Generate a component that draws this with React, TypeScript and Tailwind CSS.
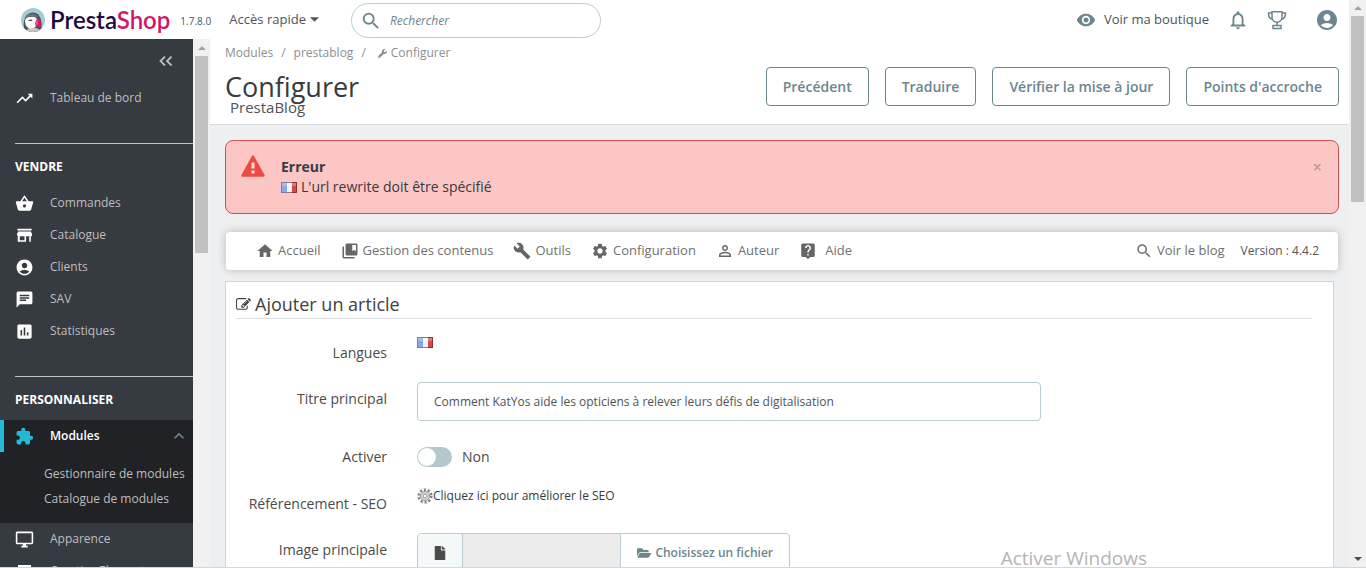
import type { ReactNode } from 'react'
import clsx from 'clsx'
import { FaFile, FaFolderOpen, FaWrench } from 'react-icons/fa'
import {
    MdAccountCircle,
    MdAssessment,
    MdBuild,
    MdChat,
    MdCollectionsBookmark,
    MdExtension,
    MdHome,
    MdKeyboardArrowUp,
    MdLiveHelp,
    MdOutlineDesktopWindows,
    MdOutlineNotifications,
    MdPersonOutline,
    MdRemoveRedEye,
    MdSearch,
    MdSettings,
    MdTrendingUp
} from 'react-icons/md'

const sellItems = [
    { label: 'Commandes', icon: <BasketIcon /> },
    { label: 'Catalogue', icon: <StoreIcon /> },
    { label: 'Clients', icon: <MdAccountCircle /> },
    { label: 'SAV', icon: <MdChat /> },
    { label: 'Statistiques', icon: <MdAssessment /> }
]

const pageActions = ['Précédent', 'Traduire', 'Vérifier la mise à jour', "Points d'accroche"]

const blogMenu = [
    { label: 'Accueil', icon: <MdHome /> },
    { label: 'Gestion des contenus', icon: <MdCollectionsBookmark /> },
    { label: 'Outils', icon: <MdBuild /> },
    { label: 'Configuration', icon: <MdSettings /> },
    { label: 'Auteur', icon: <MdPersonOutline /> },
    { label: 'Aide', icon: <MdLiveHelp />, wide: true }
]

function BasketIcon() {
    return (
        <svg viewBox="0 0 24 24" width="1em" height="1em" fill="currentColor">
            <path d="M17.210 9l-4.380-6.560c-.19-.28-.51-.42-.83-.42-.32 0-.64.14-.83.43L6.790 9H2c-.55 0-1 .45-1 1 0 .09.01.18.04.27l2.540 9.270c.23.84 1 1.460 1.920 1.460h13c.92 0 1.690-.62 1.930-1.460l2.540-9.270L23 10c0-.55-.45-1-1-1h-4.790zM9 9l3-4.400L15 9H9zm3 8c-1.100 0-2-.9-2-2s.9-2 2-2 2 .9 2 2-.9 2-2 2z" />
        </svg>
    )
}

function StoreIcon() {
    return (
        <svg viewBox="0 0 24 24" width="1em" height="1em" fill="currentColor">
            <path d="M3 3.5h18v2.2H3zM21.500 12V10l-1.500-3H4l-1.500 3v2H3.500v8H14v-7h4v7h2v-7h1.500zM12 18H6v-5h6z" />
        </svg>
    )
}

function WarningIcon() {
    return (
        <svg viewBox="0 0 24 22" className="h-[22px] w-6 shrink-0">
            <path d="M12 1.500L22.500 20.500h-21z" fill="#ea4b42" stroke="#ea4b42" strokeWidth="2.400" strokeLinejoin="round" />
            <path d="M10.500 7.500h3v6h-3zM10.500 15.500h3v3h-3z" fill="#fbdcda" />
        </svg>
    )
}

function TrophyIcon() {
    return (
        <svg viewBox="0 0 20 20" className="h-5 w-5" fill="none" stroke="currentColor" strokeWidth="1.500">
            <path d="M5 1.800h10v5.200c0 3-2 5.200-5 5.200S5 10 5 7z" />
            <path d="M5 3H1.500c0 3.500 1.500 6 4.300 6.300M15 3h3.500c0 3.500-1.500 6-4.300 6.300M10 12v3M6 15.500h8v3H6z" />
        </svg>
    )
}

function EditIcon() {
    return (
        <svg viewBox="0 0 1792 1792" className="h-[15px] w-[15px]" fill="currentColor">
            <path d="M888 1184l116-116-152-152-116 116v56h96v96h56zm440-720q-16-16-33 1l-350 350q-17 17-1 33t33-1l350-350q17-17 1-33zm80 594v190q0 119-84.5 203.5t-203.5 84.5h-832q-119 0-203.500-84.500t-84.500-203.500v-832q0-119 84.500-203.500t203.500-84.500h832q63 0 117 25 15 7 18 23 3 17-9 29l-49 49q-14 14-32 8-23-6-45-6h-832q-66 0-113 47t-47 113v832q0 66 47 113t113 47h832q66 0 113-47t47-113v-126q0-13 9-22l64-64q15-15 35-7t20 29zm-96-738l288 288-672 672h-288v-288zm444 132l-92 92-288-288 92-92q28-28 68-28t68 28l152 152q28 28 28 68t-28 68z" />
        </svg>
    )
}

function PuffinLogo() {
    return (
        <svg viewBox="0 0 48 48" className="h-6 w-6 shrink-0">
            <defs>
                <clipPath id="badge">
                    <circle cx="24" cy="24" r="24" />
                </clipPath>
            </defs>
            <g clipPath="url(#badge)">
                <rect width="48" height="48" fill="#a2cdd3" />
                <path d="M7 48C2 28 8 9 23 9c13 0 18 11 18 25v14z" fill="#4d535c" />
                <path d="M11 48c0-6 5-9 12-9s15 3 18 9z" fill="#c9c6c0" />
                <path d="M8 26c0-6 6-9 13-8 7-2 12 3 12 9 0 8-5 14-13 14S8 34 8 26z" fill="#fdfdfd" />
                <path d="M10 15c8-6 21-4 26 4-9-3-17-2-27 1z" fill="#6b737c" />
                <path d="M14 26c3-4 7-4 9 0z" fill="#3e4450" />
                <path d="M33 21c4 1 6 4 9 12l-5 4c-2 0-6-1-9-3 0-6 2-10 5-13z" fill="#d8195f" />
                <path d="M28 29l5-5 1 9-5 2z" fill="#f0568a" />
            </g>
        </svg>
    )
}

function FrenchFlag() {
    return (
        <svg viewBox="0 0 16 11" className="h-[11px] w-4 shrink-0">
            <rect width="16" height="11" fill="#8a7890" />
            <rect x="11" width="5" height="11" fill="#8c3038" />
            <rect x="1" y="1" width="5" height="9" fill="#86a8ea" />
            <rect x="6" y="1" width="5" height="9" fill="#f4f2f4" />
            <rect x="11" y="1" width="4" height="9" fill="#d84a4a" />
            <path d="M1 1h14v3H1z" fill="#fff" opacity=".25" />
        </svg>
    )
}

function CogIcon() {
    return (
        <svg viewBox="0 0 16 16" className="h-4 w-4 shrink-0">
            <circle cx="8" cy="8" r="6.300" fill="none" stroke="#858585" strokeWidth="2.600" strokeDasharray="2.200 1.760" />
            <circle cx="8" cy="8" r="4.600" fill="#d4d4d4" stroke="#9a9a9a" strokeWidth="1" />
            <circle cx="8" cy="8" r="1.900" fill="#fff" stroke="#9a9a9a" strokeWidth="1" />
        </svg>
    )
}

function ScrollArrow({ down, className }: { down?: boolean; className?: string }) {
    return (
        <svg viewBox="0 0 8 4" className={clsx('h-1 w-2', className)} fill="currentColor">
            <path d={down ? 'M0 0h8L4 4z' : 'M0 4h8L4 0z'} />
        </svg>
    )
}

function NavItem({ icon, label }: { icon: ReactNode; label: string }) {
    return (
        <a href="#" className="flex h-8 items-center pl-[15px] text-xs text-[#bebebe]">
            <span className="w-[35px] text-[19px] text-white">{icon}</span>
            {label}
        </a>
    )
}

function SideSection({ title, children }: { title: string; children: ReactNode }) {
    return (
        <section className="mt-[29px]">
            <h2 className="ml-[15px] border-t border-[#c3c5c7] pt-[13px] pb-[10px] text-xs leading-5 font-bold text-white uppercase">
                {title}
            </h2>
            {children}
        </section>
    )
}

function Sidebar() {
    return (
        <nav className="w-[193px] shrink-0 overflow-hidden bg-[#363a41]">
            <div className="flex h-[43px] items-center justify-end pr-5 text-[#bebebe]">
                <button type="button" aria-label="Réduire le menu">
                    <svg viewBox="0 0 14 10" className="h-[10px] w-[14px]" fill="none" stroke="currentColor" strokeWidth="1.800">
                        <path d="M6 0.500L1.500 5 6 9.500M12.500 0.500L8 5l4.500 4.500" />
                    </svg>
                </button>
            </div>
            <NavItem icon={<MdTrendingUp />} label="Tableau de bord" />
            <SideSection title="Vendre">
                {sellItems.map((item) => (
                    <NavItem key={item.label} icon={item.icon} label={item.label} />
                ))}
            </SideSection>
            <SideSection title="Personnaliser">
                <div className="bg-[#202226] pb-3">
                    <a
                        href="#"
                        className="flex h-8 items-center border-l-4 border-[#25b9d7] pr-1 pl-[11px] text-xs font-semibold text-white"
                    >
                        <MdExtension className="mr-4 text-[19px] text-[#25b9d7]" />
                        <span className="flex-1">Modules</span>
                        <MdKeyboardArrowUp className="text-xl text-[#6c868e]" />
                    </a>
                    <div className="flex flex-col pt-[9px] pl-11 text-xs leading-[25px] whitespace-nowrap text-[#bebebe]">
                        <a href="#">Gestionnaire de modules</a>
                        <a href="#">Catalogue de modules</a>
                    </div>
                </div>
                <NavItem icon={<MdOutlineDesktopWindows />} label="Apparence" />
                <NavItem
                    icon={
                        <svg viewBox="0 0 20 20" className="h-5 w-5" fill="currentColor">
                            <path d="M3 4h13v3H3zM3 9h13v3H3zM3 14h13v3H3z" />
                        </svg>
                    }
                    label="Creative Elements"
                />
            </SideSection>
        </nav>
    )
}

function TopBar() {
    return (
        <header className="flex h-[39px] shrink-0 items-center bg-white pr-[10px] pl-[21px] text-[13px] text-[#4e5458]">
            <a href="#" className="flex items-center">
                <PuffinLogo />
                <span className="ml-[5px] font-['Lato'] text-[24px] leading-6 font-semibold text-[#1f0a43]">
                    Presta<span className="text-[#d0176b]">Shop</span>
                </span>
            </a>
            <span className="mt-1 ml-[10px] w-[49px] text-[10px]">1.7.8.0</span>
            <button type="button" className="flex items-center gap-1">
                Accès rapide
                <ScrollArrow down className="h-[5px] w-[9px]" />
            </button>
            <label className="mt-[2px] ml-8 flex h-[35px] w-[250px] items-center rounded-full border border-[#bbcdd2] pl-2">
                <MdSearch className="mr-2 shrink-0 text-[22px] text-[#6c868e]" />
                <input
                    type="search"
                    aria-label="Rechercher"
                    placeholder="Rechercher"
                    className="w-full bg-transparent text-xs italic outline-none placeholder:text-[#6c868e]"
                />
            </label>
            <div className="ml-auto flex items-center text-[#6c868e]">
                <a href="#" className="mr-[18px] flex items-center gap-2">
                    <MdRemoveRedEye className="text-xl" />
                    <span className="text-[#4e5458]">Voir ma boutique</span>
                </a>
                <button type="button" aria-label="Notifications" className="mr-[18px]">
                    <MdOutlineNotifications className="text-[22px]" />
                </button>
                <button type="button" aria-label="Récompenses" className="mr-[28px]">
                    <TrophyIcon />
                </button>
                <button type="button" aria-label="Compte">
                    <MdAccountCircle className="text-2xl" />
                </button>
            </div>
        </header>
    )
}

function PageHead() {
    return (
        <div className="flex h-[86px] shrink-0 items-end justify-between border-b border-[#d9dcde] bg-white pr-[10px] pl-[15px]">
            <div className="self-start">
                <div className="flex items-center pt-1 text-xs leading-5 text-[#8a8f92]">
                    <a href="#">Modules</a>
                    <span className="mx-2">/</span>
                    <a href="#">prestablog</a>
                    <span className="mx-2">/</span>
                    <FaWrench className="mx-1 text-[9px]" />
                    <a href="#">Configurer</a>
                </div>
                <h1 className="mt-2 text-[27px] leading-8 text-[#363a41]">Configurer</h1>
                <h2 className="-mt-1.5 ml-[5px] text-[15px] leading-5 text-[#4e5458]">PrestaBlog</h2>
            </div>
            <div className="mb-[18px] flex gap-4">
                {pageActions.map((label) => (
                    <button
                        key={label}
                        type="button"
                        className="h-[39px] rounded border border-[#6c868e] px-4 text-sm font-semibold text-[#6c868e]"
                    >
                        {label}
                    </button>
                ))}
            </div>
        </div>
    )
}

function ErrorAlert() {
    return (
        <div
            role="alert"
            className="flex h-[74px] shrink-0 items-start rounded-lg border border-[#d0504f] bg-[#fbc6c3] pt-4 pr-4 pl-[15px] text-sm leading-5 text-[#363a41]"
        >
            <span className="-mt-0.5 mr-4">
                <WarningIcon />
            </span>
            <div className="flex-1">
                <p className="font-bold">Erreur</p>
                <p className="flex items-center gap-1">
                    <FrenchFlag />
                    L'url rewrite doit être spécifié
                </p>
            </div>
            <button type="button" aria-label="Fermer" className="text-base leading-5 font-semibold text-[#c39594]">
                ×
            </button>
        </div>
    )
}

function BlogMenu() {
    return (
        <div className="mt-[18px] mr-px ml-px flex h-[38px] shrink-0 items-center rounded bg-white pr-[19px] pl-[30px] text-[13px] text-[#6f6f6f] shadow-[0_0_8px_#b8b8b8]">
            <nav className="flex gap-5">
                {blogMenu.map((item) => (
                    <a key={item.label} href="#" className={clsx('flex items-center', item.wide ? 'gap-2' : 'gap-1')}>
                        <span className="text-lg text-[#666]">{item.icon}</span>
                        {item.label}
                    </a>
                ))}
            </nav>
            <a href="#" className="ml-auto flex items-center gap-1">
                <MdSearch className="text-lg" />
                Voir le blog
            </a>
            <span className="ml-4 text-xs text-[#555]">Version : 4.4.2</span>
        </div>
    )
}

interface FormRowProps {
    label: string
    htmlFor: string
    className: string
    labelClass?: string
    children: ReactNode
}

function FormRow({ label, htmlFor, className, labelClass, children }: FormRowProps) {
    return (
        <div className={clsx('flex', className)}>
            <label
                htmlFor={htmlFor}
                className={clsx('mr-[30px] w-[151px] shrink-0 text-right text-sm leading-5 text-[#4a4a4a]', labelClass)}
            >
                {label}
            </label>
            {children}
        </div>
    )
}

function ArticleForm() {
    return (
        <form className="mt-[11px] mr-[5px] flex-1 border border-[#cfd4d8] bg-white px-[10px]">
            <h3 className="mr-[11px] flex h-[37px] items-center gap-1 border-b border-[#dcdfe1] pt-2 text-lg text-[#414141]">
                <EditIcon />
                Ajouter un article
            </h3>

            <FormRow label="Langues" htmlFor="lang" className="items-center pt-[18px]">
                <button id="lang" type="button" aria-label="Français" className="mb-5">
                    <FrenchFlag />
                </button>
            </FormRow>

            <FormRow label="Titre principal" htmlFor="title" className="pt-[14px]" labelClass="pt-[7px]">
                <input
                    id="title"
                    type="text"
                    defaultValue="Comment KatYos aide les opticiens à relever leurs défis de digitalisation"
                    className="h-[39px] w-[624px] rounded border border-[#bbcdd2] px-4 text-xs text-[#4e5458]"
                />
            </FormRow>

            <FormRow label="Activer" htmlFor="active" className="items-center pt-[26px]">
                <input id="active" type="checkbox" role="switch" className="peer sr-only" />
                <label
                    htmlFor="active"
                    className="flex h-5 w-[35px] items-center rounded-full bg-[#b3c7cd] px-px peer-checked:justify-end"
                >
                    <span className="h-[18px] w-[18px] rounded-full bg-white" />
                </label>
                <span className="ml-[10px] text-sm leading-5 text-[#4a4a4a]">Non</span>
            </FormRow>

            <FormRow label="Référencement - SEO" htmlFor="seo" className="items-end pt-[19px]">
                <button id="seo" type="button" className="mb-2 flex items-center text-xs leading-5 text-[#363a41]">
                    <CogIcon />
                    Cliquez ici pour améliorer le SEO
                </button>
            </FormRow>

            <FormRow label="Image principale" htmlFor="image" className="pt-[19px]" labelClass="pt-[7px]">
                <div className="flex h-[39px] w-[373px] overflow-hidden rounded border border-[#bbcdd2] text-xs">
                    <span className="flex w-[45px] items-center justify-center border-r border-[#bbcdd2] bg-[#f5f8f9] text-[#4a4a4a]">
                        <FaFile className="text-sm" />
                    </span>
                    <input id="image" type="text" readOnly className="min-w-0 flex-1 bg-[#ececec] px-2" />
                    <button
                        type="button"
                        className="flex items-center gap-1 border-l border-[#bbcdd2] px-4 font-semibold text-[#6c868e]"
                    >
                        <FaFolderOpen className="text-sm" />
                        Choisissez un fichier
                    </button>
                </div>
            </FormRow>
        </form>
    )
}

export default function App() {
    return (
        <div className="relative flex h-screen flex-col overflow-hidden font-['Open_Sans',sans-serif]">
            <div className="flex min-h-0 flex-1">
                <div className="flex min-w-0 flex-1 flex-col">
                    <TopBar />
                    <div className="flex min-h-0 flex-1">
                        <Sidebar />
                        <div className="flex w-[17px] shrink-0 flex-col items-center bg-[#f1f1f1] text-[#a3a3a3]">
                            <div className="flex h-[17px] items-center">
                                <ScrollArrow />
                            </div>
                            <div className="h-[197px] w-[13px] bg-[#c1c1c1]" />
                        </div>
                        <main className="flex min-w-0 flex-1 flex-col bg-[#eeeff1]">
                            <PageHead />
                            <div className="flex min-h-0 flex-1 flex-col overflow-hidden pt-[15px] pr-[10px] pl-[15px]">
                                <ErrorAlert />
                                <BlogMenu />
                                <ArticleForm />
                            </div>
                        </main>
                    </div>
                </div>
                <div className="flex w-[17px] shrink-0 flex-col items-center bg-[#f1f1f1] text-[#a3a3a3]">
                    <div className="flex h-4 items-center">
                        <ScrollArrow />
                    </div>
                    <div className="h-[186px] w-[13px] bg-[#c1c1c1]" />
                    <div className="mt-auto flex h-[17px] items-center text-[#505050]">
                        <ScrollArrow down />
                    </div>
                </div>
            </div>
            <div className="h-px shrink-0 bg-[#d4d6d8]" />
            <p className="pointer-events-none absolute right-[219px] bottom-0 text-[19px] leading-5 text-[#b4b4b4]">Activer Windows</p>
        </div>
    )
}
